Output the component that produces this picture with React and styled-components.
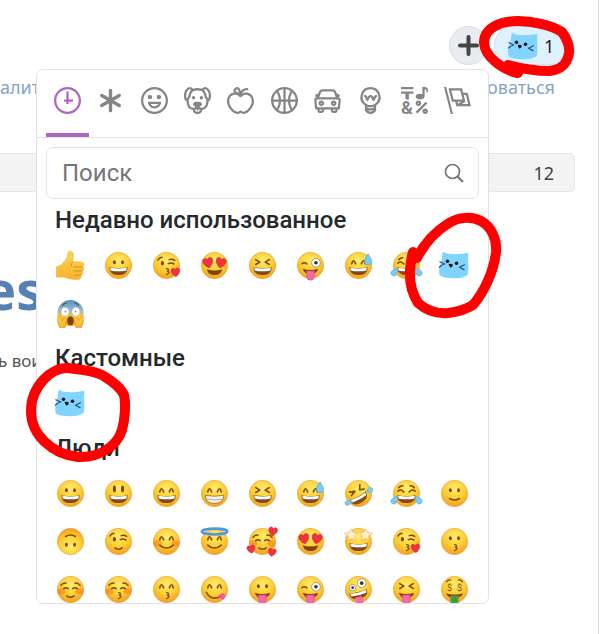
import React, { useState } from 'react'
import styled, { createGlobalStyle } from 'styled-components'

const GlobalStyle = createGlobalStyle`
  * {
    box-sizing: border-box;
  }
  body {
    margin: 0;
    background: #fff;
    overflow: hidden;
  }
  button {
    font: inherit;
    border: none;
    background: none;
    padding: 0;
    cursor: pointer;
  }
`

const Page = styled.div`
  position: relative;
  min-height: 100vh;
  overflow: hidden;
  border-right: 1px solid #d8d8d8;
  font-family: 'Noto Sans', sans-serif;
`

const Reactions = styled.div`
  display: flex;
  justify-content: flex-end;
  gap: 6px;
  padding: 26px 26px 0 0;
`

const AddButton = styled.button`
  display: flex;
  align-items: center;
  justify-content: center;
  width: 39px;
  height: 39px;
  border: 1px solid #d5dbe1;
  border-radius: 50%;
  background: #e9ecf1;
`

const Reaction = styled.button`
  display: flex;
  align-items: center;
  gap: 5px;
  width: 78px;
  height: 39px;
  padding-left: 12px;
  border: 1px solid #c9e3f3;
  border-radius: 20px;
  background: #def1fd;
  color: #222;
  font-size: 18px;
`

const Links = styled.nav`
  display: flex;
  justify-content: space-between;
  padding: 9px 43px 0 0;
  line-height: 26px;
`

const PageLink = styled.a`
  color: #86a3c9;
  font-size: 18px;
  text-decoration: none;
`

const CountBar = styled.div`
  display: flex;
  justify-content: flex-end;
  align-items: center;
  height: 39px;
  margin: 53px 23px 0 0;
  padding-right: 20px;
  border: 1px solid #e6e6e6;
  border-left: none;
  border-radius: 0 5px 5px 0;
  background: #f3f3f3;
  color: #444;
  font-size: 18px;
`

const Title = styled.h1`
  margin: 63px 0 0 -16px;
  color: #5681b5;
  font-size: 54px;
  font-weight: 700;
  line-height: 68px;
`

const Lead = styled.p`
  margin: 25px 0 0 -2px;
  color: #555;
  font-size: 17px;
  line-height: 26px;
`

const Picker = styled.section`
  position: absolute;
  top: 69px;
  left: 36px;
  width: 453px;
  border: 1px solid #e2e2e2;
  border-radius: 7px;
  background: #fff;
  overflow: hidden;
  font-family: Roboto, sans-serif;
`

const Anchors = styled.nav`
  display: flex;
  padding: 0 9px;
  border-bottom: 1px solid #e2e2e2;
`

const Anchor = styled.button`
  flex: 1;
  display: flex;
  justify-content: center;
  height: 67px;
  padding-top: 17px;
  border-bottom: 4px solid ${(p) => (p.$active ? '#ae65c5' : 'transparent')};
  color: ${(p) => (p.$active ? '#ae65c5' : '#858585')};
`

const AnchorSvg = styled.svg`
  width: 27px;
  height: 27px;
  overflow: visible;
`

const SearchBox = styled.label`
  display: flex;
  align-items: center;
  height: 52px;
  margin: 9px 9px 0;
  padding: 0 14px 0 15px;
  border: 1px solid #e2e2e2;
  border-radius: 7px;
`

const SearchInput = styled.input`
  flex: 1;
  min-width: 0;
  padding: 0;
  border: none;
  outline: none;
  background: none;
  font-family: inherit;
  font-size: 24px;
  &::placeholder {
    color: #757575;
  }
`

const Scroll = styled.div`
  height: 404px;
  padding: 0 9px;
  overflow-y: auto;
  scrollbar-width: none;
`

const Heading = styled.h2`
  margin: 0;
  padding-left: 9px;
  color: #26292c;
  font-size: 24px;
  font-weight: 500;
  line-height: 42px;
`

const Grid = styled.div`
  display: grid;
  grid-template-columns: repeat(9, 48px);
  grid-auto-rows: 48px;
`

const EmojiButton = styled.button`
  display: flex;
  align-items: center;
  justify-content: center;
`

const EmojiSvg = styled.svg`
  width: 29px;
  height: 29px;
  overflow: visible;
`

const CatSvg = styled.svg`
  width: 32px;
  height: 30px;
  overflow: visible;
`

const Marks = styled.svg`
  position: absolute;
  top: 0;
  left: 0;
  width: 599px;
  height: 634px;
  pointer-events: none;
`

const CIRCLE =
  'M12 0C5.373 0 0 5.373 0 12s5.373 12 12 12 12-5.373 12-12S18.627 0 12 0m0 22C6.486 22 2 17.514 2 12S6.486 2 12 2s10 4.486 10 10-4.486 10-10 10'

const anchors = [
  { name: 'Недавно использованное', paths: ['M13 4h-2l-.001 7H9v2h2v2h2v-2h4v-2h-4z', CIRCLE] },
  { name: 'Кастомные', star: true },
  {
    name: 'Люди',
    paths: [
      CIRCLE,
      'M8 7a2 2 0 1 0-.001 3.999A2 2 0 0 0 8 7M16 7a2 2 0 1 0-.001 3.999A2 2 0 0 0 16 7M15.232 15c-.693 1.195-1.87 2-3.349 2-1.477 0-2.655-.805-3.347-2H15m3-2H6a6 6 0 1 0 12 0',
    ],
  },
  {
    name: 'Природа',
    paths: [
      'M15.5 8a1.5 1.5 0 1 0 .001 3.001A1.5 1.5 0 0 0 15.5 8M8.5 8a1.5 1.5 0 1 0 .001 3.001A1.5 1.5 0 0 0 8.5 8',
      'M18.933 0h-.027c-.97 0-2.138.787-3.018 1.497-1.274-.374-2.612-.51-3.887-.51-1.285 0-2.616.133-3.874.517C7.245.79 6.069 0 5.093 0h-.027C3.352 0 .07 2.67.002 7.026c-.039 2.479.276 4.238 1.04 5.013.254.258.882.677 1.295.882.191 3.177.922 5.238 2.536 6.38.897.637 2.187.949 3.2 1.102C8.04 20.6 8 20.795 8 21c0 1.773 2.35 3 4 3 1.648 0 4-1.227 4-3 0-.201-.038-.393-.072-.586 2.573-.385 5.435-1.877 5.925-7.587.396-.22.887-.568 1.104-.788.763-.774 1.079-2.534 1.04-5.013C23.929 2.67 20.646 0 18.933 0M3.223 9.135c-.237.281-.837 1.155-.884 1.238-.15-.41-.368-1.349-.337-3.291.051-3.281 2.478-4.972 3.091-5.031.256.015.731.27 1.265.646-1.11 1.171-2.275 2.915-2.352 5.125-.133.546-.398.858-.783 1.313M12 22c-.901 0-1.954-.693-2-1 0-.654.475-1.236 1-1.602V20a1 1 0 1 0 2 0v-.602c.524.365 1 .947 1 1.602-.046.307-1.099 1-2 1m3-3.48v.02a4.752 4.752 0 0 0-1.262-1.02c1.092-.516 2.239-1.334 2.239-2.217 0-1.842-1.781-2.195-3.977-2.195-2.196 0-3.978.354-3.978 2.195 0 .883 1.148 1.701 2.238 2.217A4.8 4.8 0 0 0 9 18.539v-.025c-1-.076-2.182-.281-2.973-.842-1.301-.92-1.838-3.045-1.853-6.478l.023-.041c.496-.826 1.49-1.45 1.804-3.102 0-2.047 1.357-3.631 2.362-4.522C9.37 3.178 10.555 3 11.948 3c1.447 0 2.685.192 3.733.57 1 .9 2.316 2.465 2.316 4.48.313 1.651 1.307 2.275 1.803 3.102.035.058.068.117.102.178-.059 5.967-1.949 7.01-4.902 7.19m6.628-8.202c-.037-.065-.074-.13-.113-.195a7.587 7.587 0 0 0-.739-.987c-.385-.455-.648-.768-.782-1.313-.076-2.209-1.241-3.954-2.353-5.124.531-.376 1.004-.63 1.261-.647.636.071 3.044 1.764 3.096 5.031.027 1.81-.347 3.218-.37 3.235',
    ],
  },
  {
    name: 'Еда',
    paths: [
      'M17 4.978c-1.838 0-2.876.396-3.68.934.513-1.172 1.768-2.934 4.68-2.934a1 1 0 0 0 0-2c-2.921 0-4.629 1.365-5.547 2.512-.064.078-.119.162-.18.244C11.73 1.838 10.798.023 9.207.023 8.579.022 7.85.306 7 .978 5.027 2.54 5.329 3.902 6.492 4.999 3.609 5.222 0 7.352 0 12.969c0 4.582 4.961 11.009 9 11.009 1.975 0 2.371-.486 3-1 .629.514 1.025 1 3 1 4.039 0 9-6.418 9-11 0-5.953-4.055-8-7-8M8.242 2.546c.641-.508.943-.523.965-.523.426.169.975 1.405 1.357 3.055-1.527-.629-2.741-1.352-2.98-1.846.059-.112.241-.356.658-.686M15 21.978c-1.08 0-1.21-.109-1.559-.402l-.176-.146c-.367-.302-.816-.452-1.266-.452s-.898.15-1.266.452l-.176.146c-.347.292-.477.402-1.557.402-2.813 0-7-5.389-7-9.009 0-5.823 4.488-5.991 5-5.991 1.939 0 2.484.471 3.387 1.251l.323.276a1.995 1.995 0 0 0 2.58 0l.323-.276c.902-.78 1.447-1.251 3.387-1.251.512 0 5 .168 5 6 0 3.617-4.187 9-7 9',
    ],
  },
  {
    name: 'Активность',
    paths: [
      'M12 0C5.373 0 0 5.372 0 12c0 6.627 5.373 12 12 12 6.628 0 12-5.373 12-12 0-6.628-5.372-12-12-12m9.949 11H17.05c.224-2.527 1.232-4.773 1.968-6.113A9.966 9.966 0 0 1 21.949 11M13 11V2.051a9.945 9.945 0 0 1 4.432 1.564c-.858 1.491-2.156 4.22-2.392 7.385H13zm-2 0H8.961c-.238-3.165-1.536-5.894-2.393-7.385A9.95 9.95 0 0 1 11 2.051V11zm0 2v8.949a9.937 9.937 0 0 1-4.432-1.564c.857-1.492 2.155-4.221 2.393-7.385H11zm4.04 0c.236 3.164 1.534 5.893 2.392 7.385A9.92 9.92 0 0 1 13 21.949V13h2.04zM4.982 4.887C5.718 6.227 6.726 8.473 6.951 11h-4.9a9.977 9.977 0 0 1 2.931-6.113M2.051 13h4.9c-.226 2.527-1.233 4.771-1.969 6.113A9.972 9.972 0 0 1 2.051 13m16.967 6.113c-.735-1.342-1.744-3.586-1.968-6.113h4.899a9.961 9.961 0 0 1-2.931 6.113',
    ],
  },
  {
    name: 'Путешествия',
    paths: [
      'M6.5 12C5.122 12 4 13.121 4 14.5S5.122 17 6.5 17 9 15.879 9 14.5 7.878 12 6.5 12m0 3c-.275 0-.5-.225-.5-.5s.225-.5.5-.5.5.225.5.5-.225.5-.5.5M17.5 12c-1.378 0-2.5 1.121-2.5 2.5s1.122 2.5 2.5 2.5 2.5-1.121 2.5-2.5-1.122-2.5-2.5-2.5m0 3c-.275 0-.5-.225-.5-.5s.225-.5.5-.5.5.225.5.5-.225.5-.5.5',
      'M22.482 9.494l-1.039-.346L21.4 9h.6c.552 0 1-.439 1-.992 0-.006-.003-.008-.003-.008H23c0-1-.889-2-1.984-2h-.642l-.731-1.717C19.262 3.012 18.091 2 16.764 2H7.236C5.909 2 4.738 3.012 4.357 4.283L3.626 6h-.642C1.889 6 1 7 1 8h.003S1 8.002 1 8.008C1 8.561 1.448 9 2 9h.6l-.043.148-1.039.346a2.001 2.001 0 0 0-1.359 2.097l.751 7.508a1 1 0 0 0 .994.901H3v1c0 1.103.896 2 2 2h2c1.104 0 2-.897 2-2v-1h6v1c0 1.103.896 2 2 2h2c1.104 0 2-.897 2-2v-1h1.096a.999.999 0 0 0 .994-.901l.751-7.508a2.001 2.001 0 0 0-1.359-2.097M6.273 4.857C6.402 4.43 6.788 4 7.236 4h9.527c.448 0 .834.43.963.857L19.313 9H4.688l1.585-4.143zM7 21H5v-1h2v1zm12 0h-2v-1h2v1zm2.189-3H2.811l-.662-6.607L3 11h18l.852.393L21.189 18z',
    ],
  },
  {
    name: 'Объекты',
    paths: [
      'M12 0a9 9 0 0 0-5 16.482V21s2.035 3 5 3 5-3 5-3v-4.518A9 9 0 0 0 12 0zm0 2c3.86 0 7 3.141 7 7s-3.14 7-7 7-7-3.141-7-7 3.14-7 7-7zM9 17.477c.94.332 1.946.523 3 .523s2.06-.19 3-.523v.834c-.91.436-1.925.689-3 .689a6.924 6.924 0 0 1-3-.69v-.833zm.236 3.07A8.854 8.854 0 0 0 12 21c.965 0 1.888-.167 2.758-.451C14.155 21.173 13.153 22 12 22c-1.102 0-2.117-.789-2.764-1.453z',
      'M14.745 12.449h-.004c-.852-.024-1.188-.858-1.577-1.824-.421-1.061-.703-1.561-1.182-1.566h-.009c-.481 0-.783.497-1.235 1.537-.436.982-.801 1.811-1.636 1.791l-.276-.043c-.565-.171-.853-.691-1.284-1.794-.125-.313-.202-.632-.27-.913-.051-.213-.127-.53-.195-.634C7.067 9.004 7.039 9 6.99 9A1 1 0 0 1 7 7h.01c1.662.017 2.015 1.373 2.198 2.134.486-.981 1.304-2.058 2.797-2.075 1.531.018 2.28 1.153 2.731 2.141l.002-.008C14.944 8.424 15.327 7 16.979 7h.032A1 1 0 1 1 17 9h-.011c-.149.076-.256.474-.319.709a6.484 6.484 0 0 1-.311.951c-.429.973-.79 1.789-1.614 1.789',
    ],
  },
  {
    name: 'Символы',
    amp: true,
    paths: [
      'M0 0h11v2H0zM4 11h3V6h4V4H0v2h4zM15.5 17c1.381 0 2.5-1.116 2.5-2.493s-1.119-2.493-2.5-2.493S13 13.13 13 14.507 14.119 17 15.5 17m0-2.986c.276 0 .5.222.5.493 0 .272-.224.493-.5.493s-.5-.221-.5-.493.224-.493.5-.493M21.5 19.014c-1.381 0-2.5 1.116-2.5 2.493S20.119 24 21.5 24s2.5-1.116 2.5-2.493-1.119-2.493-2.5-2.493m0 2.986a.497.497 0 0 1-.5-.493c0-.271.224-.493.5-.493s.5.222.5.493a.497.497 0 0 1-.5.493M22 13l-9 9 1.513 1.5 8.99-9.009zM17 11c2.209 0 4-1.119 4-2.5V2s.985-.161 1.498.949C23.01 4.055 23 6 23 6s1-1.119 1-3.135C24-.02 21 0 21 0h-2v6.347A5.853 5.853 0 0 0 17 6c-2.209 0-4 1.119-4 2.5s1.791 2.5 4 2.5',
    ],
  },
  {
    name: 'Флаги',
    paths: [
      'M0 0l6.084 24H8L1.916 0zM21 5h-4l-1-4H4l3 12h3l1 4h13L21 5zM6.563 3h7.875l2 8H8.563l-2-8zm8.832 10l-2.856 1.904L12.063 13h3.332zM19 13l-1.5-6h1.938l2 8H16l3-2z',
    ],
  },
]

const AnchorIcon = ({ item }) => (
  <AnchorSvg viewBox="0 0 24 24" fill="currentColor">
    {item.paths && item.paths.map((d) => <path key={d} d={d} />)}
    {item.star && (
      <path
        d="M12 3v18M4.2 7.5l15.6 9M19.8 7.5l-15.6 9"
        stroke="currentColor"
        strokeWidth="3"
        strokeLinecap="round"
      />
    )}
    {item.amp && (
      <text x="0" y="24" fontSize="16" fontWeight="700" fontFamily="Roboto, sans-serif">
        &amp;
      </text>
    )}
  </AnchorSvg>
)

const INK = '#7d4a0e'
const line = { fill: 'none', stroke: INK, strokeWidth: 1.7, strokeLinecap: 'round', strokeLinejoin: 'round' }
const HEART = 'M0 4.5C-6 .5-5-4.2-2.200-4.2-.8-4.200 0-2.600 0-2.600S.8-4.200 2.200-4.200C5-4.200 6 .5 0 4.5z'
const DROP = 'M0-6C2-2.5 3.6-.5 3.6 1.800a3.600 3.600 0 0 1-7.200 0C-3.600-.5-2-2.500 0-6z'

const Heart = ({ x, y, s = 1, r = 0 }) => (
  <path d={HEART} fill="#ef3340" stroke="#cf1f35" strokeWidth=".5" transform={`translate(${x} ${y}) rotate(${r}) scale(${s})`} />
)
const Drop = ({ x, y, s = 1, r = 0 }) => (
  <path d={DROP} fill="#7ccbf3" stroke="#45a8df" strokeWidth=".6" transform={`translate(${x} ${y}) rotate(${r}) scale(${s})`} />
)
const Goggle = ({ x, y, r }) => (
  <g>
    <circle cx={x} cy={y} r={r} fill="#fff" stroke="#8b8b8b" strokeWidth=".9" />
    <circle cx={x} cy={y} r={r * 0.42} fill="#3c3230" />
  </g>
)

const eyes = {
  dots: (
    <g fill={INK}>
      <ellipse cx="11.5" cy="12.5" rx="1.6" ry="2.2" />
      <ellipse cx="20.5" cy="12.5" rx="1.6" ry="2.2" />
    </g>
  ),
  tall: (
    <g fill={INK}>
      <ellipse cx="11.5" cy="11" rx="1.7" ry="3.7" />
      <ellipse cx="20.5" cy="11" rx="1.7" ry="3.7" />
    </g>
  ),
  arcs: <path {...line} strokeWidth="1.9" d="M8.5 14Q10.5 7.5 12.800 14M19.2 14Q21.5 7.5 23.5 14" />,
  squint: <path {...line} strokeWidth="1.8" d="M8.5 9.5l4.5 2.800-4.500 2.500M23.500 9.500l-4.500 2.800 4.500 2.500" />,
  closed: <path {...line} d="M8.5 15q2.5-1.800 5 0M18.500 15q2.500-1.800 5 0M5.500 11.500q2-3 5.500-2.500M26.500 11.500q-2-3-5.500-2.500" />,
  laugh: <path {...line} strokeWidth="1.8" d="M6.500 13.500q3.500-3 6.500.8M25.500 13.500q-3.500-3-6.500.8M7.500 9.500q2-2.200 4.500-2M24.500 9.500q-2-2.200-4.500-2" />,
  wink: (
    <g>
      <ellipse cx="11.5" cy="13.5" rx="1.7" ry="2.400" fill={INK} />
      <path {...line} d="M18 14q3-1.800 6 .3M6.500 10Q8 7.500 11 7M19 9.500q3-1.200 6 .8" />
    </g>
  ),
  hearts: (
    <g>
      <Heart x={9} y={13} s={1.25} r={-12} />
      <Heart x={23} y={13} s={1.25} r={12} />
    </g>
  ),
  goggle: (
    <g>
      <path {...line} d="M6.500 14q3-2.200 5.500.2" />
      <Goggle x={22} y={13} r={4.8} />
    </g>
  ),
  zany: (
    <g>
      <Goggle x={9.5} y={14} r={3.5} />
      <Goggle x={19.5} y={9} r={4.8} />
    </g>
  ),
  rolling: <path {...line} strokeWidth="1.800" d="M6 14.500l6-.8-3.800 4.500M17.500 6.500l-.3 5.500 5-1" />,
  stars: (
    <g fill="#fff0cd" stroke="#e8a34b" strokeWidth=".6" strokeLinejoin="round">
      <path d="M8 2l2.200 4 4.800.3-3.200 3.700 1.200 4.800L8.500 12.500 4 15l.8-5L.5 7l5.200-.8z" />
      <path d="M24 2l-2.200 4-4.800.3 3.200 3.700-1.200 4.800 4.500-2.300L28 15l-.8-5L31.500 7l-5.200-.8z" />
    </g>
  ),
  dollars: (
    <g fill={INK} fontFamily="Roboto, sans-serif" fontSize="10" textAnchor="middle">
      <text x="10.5" y="17.5">$</text>
      <text x="21.5" y="17.5">$</text>
      <path {...line} strokeWidth="1.3" d="M7 7.5q2-2.500 5-2M25 7.500q-2-2.500-5-2" />
    </g>
  ),
}

const openMouth = <path d="M5.800 17.800q10.200 2 20.400 0Q26 26.500 16 26.500T5.800 17.800z" fill="#7e4b17" />
const upperTeeth = <path d="M6.700 18.500q9.300 1.700 18.600 0l-.8 3.200q-8.500 1.500-17 0z" fill="#fff" />

const mouths = {
  open: (
    <g>
      {openMouth}
      {upperTeeth}
    </g>
  ),
  teeth: (
    <g>
      <path d="M5.800 18q10.200 2 20.400 0Q26 27 16 27T5.800 18z" fill="#f3f0ea" stroke="#9a6d35" strokeWidth=".9" />
      <path d="M7 22.300q9 1.400 18 0" stroke="#9b8c7c" strokeWidth=".8" fill="none" />
    </g>
  ),
  brown: <path d="M7.500 20q8.500 3 17 0Q23 26.500 16 26.500T7.500 20z" fill="#7e4310" />,
  smile: <path {...line} d="M10.500 21.500q5.500 3.500 11 0" />,
  grinLine: <path {...line} d="M8.500 20q7.500 6.500 15 0" />,
  small: <path {...line} d="M12 23q4 3 8 0" />,
  kiss: <path {...line} strokeWidth="1.5" d="M16 19.500q4 .5 1 2.800 4 1.200-1 3.700" />,
  tongue: (
    <g>
      <path d="M7.500 19.500q8.500 3 17 0Q23 25.500 16 25.500T7.500 19.500z" fill="#7e4310" />
      <path d="M11.800 22h8.400v6a4.200 4.200 0 0 1-8.400 0z" fill="#f768a8" stroke="#d84688" strokeWidth=".6" />
    </g>
  ),
  zany: (
    <g transform="rotate(-14 16 20)">
      {openMouth}
      {upperTeeth}
      <path d="M11 24h8v5a4 4 0 0 1-8 0z" fill="#f768a8" />
    </g>
  ),
  rolling: (
    <g transform="rotate(-28 17 20)">
      {openMouth}
      {upperTeeth}
    </g>
  ),
  yum: (
    <g>
      <path {...line} d="M7 19q3 6.500 9.500 6.500 4 0 6-2" />
      <path d="M20.500 22.500q3.500-4 6.500-1.500 2.300 3-1 5.800-3.200 1.200-5.500-4.300z" fill="#f556a0" />
    </g>
  ),
  money: (
    <g>
      <path d="M6.500 20.500q9.500 2 19 0Q23 25.500 16 25.500T6.500 20.500z" fill="#7e4310" />
      <path d="M11.500 22.500h9v9h-9z" fill="#4da544" />
      <path d="M14.500 24v6M17.500 24v6" stroke="#2e7a31" strokeWidth="1" />
    </g>
  ),
}

const blush = (
  <g fill="#fb7022" opacity=".5">
    <ellipse cx="6" cy="18" rx="4.5" ry="3.5" />
    <ellipse cx="26" cy="18" rx="4.5" ry="3.5" />
  </g>
)

const extras = {
  kissHeart: <Heart x={26} y={23.5} s={1.1} r={-5} />,
  sweat: <Drop x={26.5} y={9.5} s={1.1} />,
  tears: (
    <g>
      <Drop x={3} y={23} s={0.9} r={35} />
      <Drop x={29} y={23} s={0.9} r={-35} />
    </g>
  ),
  rollTears: (
    <g>
      <Drop x={5} y={26} s={0.75} r={70} />
      <Drop x={28} y={12.5} s={0.75} r={-110} />
    </g>
  ),
  halo: <ellipse cx="16" cy="5" rx="14" ry="3.2" fill="none" stroke="#4a98e5" strokeWidth="2.800" />,
  loveHearts: (
    <g>
      <Heart x={3.5} y={24.5} s={1} r={-12} />
      <Heart x={27.5} y={5} s={1.1} r={10} />
      <Heart x={26.5} y={28} s={1} r={12} />
    </g>
  ),
}

const faces = {
  grinning: ['dots', 'open'],
  smiley: ['tall', 'open'],
  smile: ['arcs', 'open'],
  grin: ['arcs', 'teeth'],
  laughing: ['squint', 'open'],
  sweat_smile: ['arcs', 'open', 'sweat'],
  rofl: ['rolling', 'rolling', 'rollTears'],
  joy: ['laugh', 'open', 'tears'],
  slight_smile: ['dots', 'smile'],
  upside_down: ['dots', 'smile'],
  wink: ['wink', 'small'],
  blush: ['arcs', 'grinLine', 'blush'],
  innocent: ['arcs', 'grinLine', 'halo'],
  smiling_hearts: ['closed', 'small', 'blush', 'loveHearts'],
  heart_eyes: ['hearts', 'brown'],
  star_struck: ['stars', 'open'],
  kissing_heart: ['wink', 'kiss', 'kissHeart'],
  kissing: ['dots', 'kiss'],
  relaxed: ['closed', 'small', 'blush'],
  kissing_closed: ['closed', 'kiss', 'blush'],
  kissing_smiling: ['arcs', 'kiss'],
  yum: ['arcs', 'yum'],
  tongue: ['dots', 'tongue'],
  wink_tongue: ['goggle', 'tongue'],
  zany: ['zany', 'zany'],
  squint_tongue: ['squint', 'tongue'],
  money: ['dollars', 'money'],
}

const Face = ({ name }) => {
  const [eye, mouth, ...more] = faces[name]
  return (
    <EmojiSvg viewBox="0 0 32 32">
      <g transform={name === 'upside_down' ? 'rotate(180 16 16)' : undefined}>
        <circle cx="16" cy="16" r="14.500" fill="url(#face)" stroke="#eda541" strokeWidth=".8" />
        {more.includes('blush') && blush}
        {eyes[eye]}
        {mouths[mouth]}
        {more.filter((m) => m !== 'blush').map((m) => <g key={m}>{extras[m]}</g>)}
      </g>
    </EmojiSvg>
  )
}

const Thumb = () => (
  <EmojiSvg viewBox="0 0 32 32">
    <path
      d="M.5 17.500q5-1 8.500-5.500 3.500-3.500 4-8Q13 .2 15.500 0q4 .8 3.500 6.300l-.8 5.700h9.300q3.500.3 3.300 3-.3 2-1.800 2.200 2 .8 1.500 3-.5 2-2 2.200 1.300 1 .8 2.600-.5 1.800-2.300 2 1 1 .4 2.400-.7 2-3.400 2Q15 31.800 8.500 28.800H.5z"
      fill="url(#hand)"
      stroke="#efae3c"
      strokeWidth=".7"
    />
    <path d="M20 17.500h9M20 22h8.500M20.500 26.600h6.500M18.500 12q-3 2-1.500 4.500" fill="none" stroke="#d98c22" strokeWidth="1" strokeLinecap="round" />
  </EmojiSvg>
)

const Scream = () => (
  <EmojiSvg viewBox="0 0 32 32">
    <circle cx="16" cy="15.500" r="14.500" fill="url(#scream)" />
    <path {...line} strokeWidth="1.2" d="M7 7q2-2 4.500-2.500M25 7q-2-2-4.500-2.500" />
    <ellipse cx="10" cy="14" rx="4" ry="4.500" fill="#fff" />
    <ellipse cx="22" cy="14" rx="4" ry="4.500" fill="#fff" />
    <circle cx="10.5" cy="14" r=".9" fill="#8a7a6a" />
    <circle cx="21.5" cy="14" r=".9" fill="#8a7a6a" />
    <ellipse cx="16" cy="24" rx="3.6" ry="5" fill="#7a4312" />
    <path d="M2 19q2-1 3 2l2 3q1-4 3.500-3 1.500 1 .5 5l-1 5.500H4Q1 27 2 19z" fill="url(#hand)" stroke="#d98c1d" strokeWidth=".7" />
    <path d="M30 19q-2-1-3 2l-2 3q-1-4-3.500-3-1.500 1-.5 5l1 5.500h6Q31 27 30 19z" fill="url(#hand)" stroke="#d98c1d" strokeWidth=".7" />
  </EmojiSvg>
)

const Cat = () => (
  <CatSvg viewBox="0 0 32 30">
    <path
      d="M5.500 2q1.500.5 3 1.500 8 1.300 16 .3 2.500-.9 5.500-.8.6 0 .5 1-.6 3.500-.3 7.500.5 6.500-.2 12.500Q28 28 17 28.300 5 28.500 1.500 25q-.8-5 .3-9.500 2.400-6 2.700-12.500 0-1.200 1-1z"
      fill="#80d4ff"
    />
    <g fill="#111">
      <circle cx="9.5" cy="11.200" r="1.700" />
      <circle cx="18.500" cy="13.200" r="1.700" />
      <path d="M10.600 14q2.200-.6 4.200.5.200 2.200-2.300 3.200-1.300-1.300-1.900-3.700z" />
    </g>
    <path
      d="M1.800 11.800l5 2.200q-3 .8-5.300 3M26.500 14.800l-5 2.500 4.500 2.300"
      fill="none"
      stroke="#2a5268"
      strokeWidth="1.2"
      strokeLinecap="round"
      strokeLinejoin="round"
    />
  </CatSvg>
)

const Emoji = ({ name }) => {
  if (name === 'cat') return <Cat />
  if (name === 'thumbs_up') return <Thumb />
  if (name === 'scream') return <Scream />
  return <Face name={name} />
}

const categories = [
  {
    title: 'Недавно использованное',
    items: ['thumbs_up', 'grinning', 'kissing_heart', 'heart_eyes', 'laughing', 'wink_tongue', 'sweat_smile', 'joy', 'cat', 'scream'],
  },
  { title: 'Кастомные', items: ['cat'] },
  {
    title: 'Люди',
    items: [
      'grinning', 'smiley', 'smile', 'grin', 'laughing', 'sweat_smile', 'rofl', 'joy', 'slight_smile',
      'upside_down', 'wink', 'blush', 'innocent', 'smiling_hearts', 'heart_eyes', 'star_struck', 'kissing_heart', 'kissing',
      'relaxed', 'kissing_closed', 'kissing_smiling', 'yum', 'tongue', 'wink_tongue', 'zany', 'squint_tongue', 'money',
    ],
  },
]

const Gradients = () => (
  <defs>
    <radialGradient id="face" cx=".5" cy=".3" r=".72">
      <stop offset="0" stopColor="#ffec70" />
      <stop offset=".55" stopColor="#fdce31" />
      <stop offset="1" stopColor="#f39a20" />
    </radialGradient>
    <linearGradient id="hand" x1="0" y1="0" x2="0" y2="1">
      <stop offset="0" stopColor="#ffd552" />
      <stop offset="1" stopColor="#f9b22c" />
    </linearGradient>
    <linearGradient id="scream" x1="0" y1="0" x2="0" y2="1">
      <stop offset="0" stopColor="#4a8fd6" />
      <stop offset=".4" stopColor="#9dbbc4" />
      <stop offset=".65" stopColor="#fbca3c" />
      <stop offset="1" stopColor="#f7a325" />
    </linearGradient>
  </defs>
)

const EmojiPicker = () => {
  const [active, setActive] = useState(0)
  return (
    <Picker>
      <Anchors>
        {anchors.map((item, i) => (
          <Anchor key={item.name} type="button" aria-label={item.name} $active={i === active} onClick={() => setActive(i)}>
            <AnchorIcon item={item} />
          </Anchor>
        ))}
      </Anchors>
      <SearchBox>
        <SearchInput type="text" placeholder="Поиск" aria-label="Поиск" />
        <svg width="20" height="20" viewBox="0 0 20 20" fill="none" stroke="#777" strokeWidth="1.700">
          <circle cx="8.500" cy="8.500" r="7" />
          <path d="M13.500 13.500l5.500 5.500" strokeWidth="2.200" />
        </svg>
      </SearchBox>
      <Scroll>
        {categories.map((c) => (
          <div key={c.title}>
            <Heading>{c.title}</Heading>
            <Grid>
              {c.items.map((name) => (
                <EmojiButton key={name} type="button" aria-label={name}>
                  <Emoji name={name} />
                </EmojiButton>
              ))}
            </Grid>
          </div>
        ))}
      </Scroll>
    </Picker>
  )
}

const App = () => {
  return (
    <Page>
      <GlobalStyle />
      <Reactions>
        <AddButton type="button" aria-label="Добавить реакцию">
          <svg width="21" height="21" viewBox="0 0 21 21" stroke="#444" strokeWidth="4" strokeLinecap="round">
            <path d="M10.500 2v17M2 10.500h17" />
          </svg>
        </AddButton>
        <Reaction type="button">
          <Cat />
          1
        </Reaction>
      </Reactions>
      <Links>
        <PageLink href="#">алит</PageLink>
        <PageLink href="#">оваться</PageLink>
      </Links>
      <CountBar>12</CountBar>
      <Title>es</Title>
      <Lead>ь вои</Lead>
      <EmojiPicker />
      <Marks viewBox="0 0 599 634" fill="none" stroke="#fe0000" strokeWidth="10" strokeLinecap="round" strokeLinejoin="round">
        <Gradients />
        <path d="M517 73C502 69 485 57 484 43 484 28 500 21 518 21 532 21 551 25 562 32 567 39 570 46 569 53 567 65 560 70 549 71 537 71 523 69 508 65L518 73" />
        <path d="M413 252C408 270 408 287 418 303 426 310 437 314 448 313 456 312 465 310 473 305 485 291 494 270 496 252 497 240 492 227 481 221 472 216 459 217 449 223 436 231 424 244 417 258" />
        <path d="M68 368C52 367 31 386 31 411 31 435 52 454 78 457 100 458 117 446 122 430 125 419 126 404 124 395 120 386 110 380 102 375 91 370 80 370 68 368z" />
      </Marks>
    </Page>
  )
}

export default App
